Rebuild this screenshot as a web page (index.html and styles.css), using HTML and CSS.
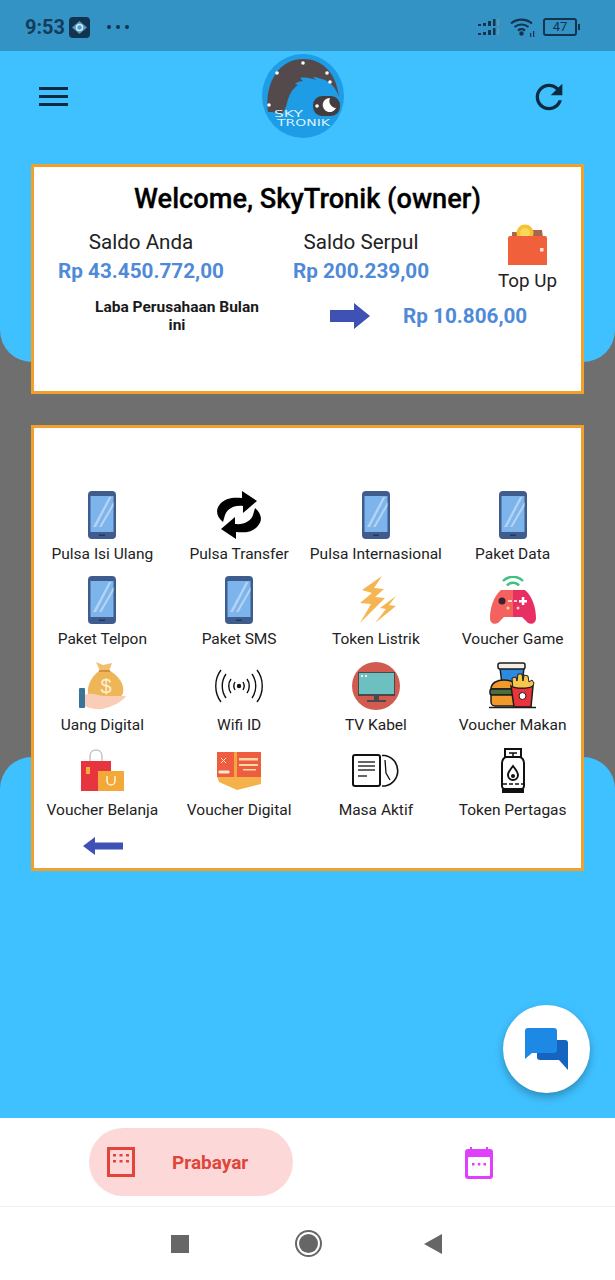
FILE: index.html
```html
<!DOCTYPE html>
<html>
  <head>
    <meta charset="utf-8" />
    <title>SkyTronik</title>
    <link rel="stylesheet" href="styles.css">
  </head>
  <body>
    <svg class="defs" width="0" height="0">
      <symbol id="phone" viewBox="0 0 28 48">
        <rect width="28" height="48" rx="4" fill="#3f5c8e"/>
        <rect x="2.500" y="5" width="23" height="36" fill="#7db4ec"/>
        <path d="M5 36 21 6h2.500L8 36zM11 36 25.500 11v4L13.500 36z" fill="#b3d3f4"/>
        <rect x="11" y="43.500" width="6" height="1.500" fill="#26395c"/>
      </symbol>
    </svg>

    <div class="status">
      <div class="status-left">
        <span class="time">9:53</span>
        <svg class="status-app" viewBox="0 0 21 21">
          <rect width="21" height="21" rx="4" fill="#12344f"/>
          <path d="M3 10.500 10.500 4 18 10.500 10.500 17z" fill="#4f9cc9"/>
          <circle cx="10.500" cy="10.500" r="3" fill="none" stroke="#d5e6ef" stroke-width="1.500"/>
        </svg>
        <span class="dots"><i></i><i></i><i></i></span>
      </div>
      <div class="status-right">
        <svg class="signal" viewBox="0 0 22 16">
          <path d="M0 5h3v2H0zM5 4h3v3H5zM10 2h3v5h-3zM15 0h2.500v7H15zM0 14h3v2H0zM5 13h3v3H5zM10 11h3v5h-3zM15 9h2.500v7H15z" fill="#12344f"/>
          <path d="M19.500 0H21v7h-1.500zM19.500 9H21v7h-1.500z" fill="#6b97ae"/>
        </svg>
        <svg class="wifi" viewBox="0 0 26 20">
          <path d="M1 6.500a16 16 0 0 1 21 0M4.500 10a11 11 0 0 1 14 0M8 13.500a6 6 0 0 1 7 0" fill="none" stroke="#12344f" stroke-width="2.200"/>
          <circle cx="11.500" cy="16.500" r="2.200" fill="#12344f"/>
          <path d="M20 16h1.200v4H20zM23 14h1.200v6H23z" fill="#12344f"/>
        </svg>
        <div class="battery"><span>47</span></div>
      </div>
    </div>

    <div class="app">
      <div class="sky-top"></div>
      <div class="sky-bottom"></div>

      <div class="content">
        <header class="topbar">
          <div class="menu"><i></i><i></i><i></i></div>
          <svg class="logo" viewBox="0 0 82 84">
            <ellipse cx="41" cy="42" rx="41" ry="42" fill="#1e9ce6"/>
            <path d="M6 58C2 28 18 5 41 5c19 0 33 13 36 38-3-9-8-14-14-17-4-1-8-3-12-3l3 3c-6-2-11-3-16-2l3 3c-3 0-6 1-8 3l3 1c-6 4-9 10-11 18-1 5-3 8-5 11-3 0-6-1-10-2z" fill="#544a4c"/>
            <rect x="51" y="42" width="27" height="20" rx="9" fill="#443d40"/>
            <path d="M68 44a7 7 0 1 0 6 10 7 7 0 0 1-6-10z" fill="#fff"/>
            <g fill="#fff">
              <circle cx="41" cy="9" r="1.800"/><circle cx="15" cy="19" r="1.800"/>
              <circle cx="65" cy="19" r="1.800"/><circle cx="68" cy="28" r="1.800"/>
              <circle cx="7" cy="51" r="1.800"/><circle cx="55" cy="52" r="1.800"/>
            </g>
            <text class="logo-text" x="12" y="63" textLength="29" lengthAdjust="spacingAndGlyphs">SKY</text>
            <text class="logo-text" x="15" y="72" textLength="53" lengthAdjust="spacingAndGlyphs">TRONIK</text>
          </svg>
          <svg class="refresh" viewBox="0 0 24 24">
            <path d="M17.650 6.350C16.200 4.900 14.210 4 12 4c-4.420 0-7.990 3.580-7.990 8s3.570 8 7.990 8c3.730 0 6.840-2.550 7.730-6h-2.080c-.82 2.330-3.040 4-5.650 4-3.310 0-6-2.690-6-6s2.690-6 6-6c1.660 0 3.140.69 4.220 1.780L13 11h7V4l-2.350 2.350z" fill="#0c2a41"/>
          </svg>
        </header>

        <section class="card card-saldo">
          <h1 class="welcome">Welcome, SkyTronik (owner)</h1>
          <div class="saldo-row">
            <div class="saldo">
              <div class="saldo-label">Saldo Anda</div>
              <div class="money">Rp 43.450.772,00</div>
            </div>
            <div class="saldo">
              <div class="saldo-label">Saldo Serpul</div>
              <div class="money">Rp 200.239,00</div>
            </div>
            <div class="topup">
              <svg class="wallet" viewBox="0 0 42 42">
                <path d="M5 8h10v6H5zM26 6h9l1 8H26z" fill="#a8654f"/>
                <circle cx="18" cy="9" r="8.500" fill="#f6c22d"/>
                <circle cx="18" cy="9" r="5" fill="#f9d65c"/>
                <path d="M3 12h35a2 2 0 0 1 2 2v27H1V14a2 2 0 0 1 2-2z" fill="#f0603a"/>
                <rect x="33" y="24" width="3.500" height="3.500" fill="#ffe3d8"/>
              </svg>
              <div class="topup-label">Top Up</div>
            </div>
          </div>
          <div class="laba-row">
            <div class="laba-label">Laba Perusahaan Bulan ini</div>
            <svg class="arrow" viewBox="0 0 40 26">
              <path d="M0 7h24V0l16 13-16 13v-7H0z" fill="#3f51b5"/>
            </svg>
            <div class="money">Rp 10.806,00</div>
          </div>
        </section>

        <section class="card card-menu">
          <div class="menu-grid">
            <div class="item">
              <svg class="ic ic-phone"><use href="#phone"/></svg>
              <span>Pulsa Isi Ulang</span>
            </div>
            <div class="item">
              <svg class="ic" viewBox="0 0 48 48">
                <path d="M27 0l15 10-14 12v-7c-9-1-16 3-18 9l-2 7C1 25 0 18 6 12c5-5 12-6 21-5z" fill="#000"/>
                <path d="M21 48 6 38l14-12v7c9 1 16-3 18-9l2-7c7 6 8 13 2 19-5 5-12 6-21 5z" fill="#000"/>
              </svg>
              <span>Pulsa Transfer</span>
            </div>
            <div class="item">
              <svg class="ic ic-phone"><use href="#phone"/></svg>
              <span>Pulsa Internasional</span>
            </div>
            <div class="item">
              <svg class="ic ic-phone"><use href="#phone"/></svg>
              <span>Paket Data</span>
            </div>

            <div class="item">
              <svg class="ic ic-phone"><use href="#phone"/></svg>
              <span>Paket Telpon</span>
            </div>
            <div class="item">
              <svg class="ic ic-phone"><use href="#phone"/></svg>
              <span>Paket SMS</span>
            </div>
            <div class="item">
              <svg class="ic" viewBox="0 0 48 48">
                <path d="M30 0 10 14l10 3L8 27l11 1L8 47l25-25-10-1 9-8-10-1z" fill="#f5b550"/>
                <path d="M44 20 28 32l6 1-11 14 21-17-7-1z" fill="#f5b550"/>
              </svg>
              <span>Token Listrik</span>
            </div>
            <div class="item">
              <svg class="ic" viewBox="0 0 48 48">
                <path d="M14 5a14 14 0 0 1 20 0M18 9.500a8 8 0 0 1 12 0" fill="none" stroke="#3fbf80" stroke-width="2.500"/>
                <path d="M12 14h12v27H15l-6 6c-4 2-8 0-8-5 0-9 3-21 11-28z" fill="#f4625f"/>
                <path d="M24 14h12c8 7 11 19 11 28 0 5-4 7-8 5l-6-6h-9z" fill="#e82f63"/>
                <circle cx="13" cy="25" r="3.500" fill="#3a2030"/>
                <path d="M30 24h8v2.500h-8zM32.800 21h2.500v8h-2.500z" fill="#fff"/>
                <path d="M19 24h4v2h-4zM25 24h3v2h-3z" fill="#ffd0c8"/>
                <circle cx="19" cy="32" r="1.500" fill="#ffd69a"/><circle cx="29" cy="32" r="1.500" fill="#ffd69a"/>
              </svg>
              <span>Voucher Game</span>
            </div>

            <div class="item">
              <svg class="ic" viewBox="0 0 48 48">
                <path d="M18 0l7 3 9-2-3 8H22z" fill="#f0c070"/>
                <path d="M22 8h9c10 6 16 15 14 23-2 6-8 8-17 8S11 38 10 31C9 23 14 14 22 8z" fill="#eeb657"/>
                <path d="M21 8h11v2H21z" fill="#d6923a"/>
                <text class="dollar" x="28" y="31">$</text>
                <path d="M6 33c8-3 13 0 20 1l22 0c-4 6-14 11-24 13-6 1-12-1-18-3z" fill="#f9cdb8"/>
                <rect x="1" y="26" width="6" height="20" rx="1" fill="#3a7298"/>
              </svg>
              <span>Uang Digital</span>
            </div>
            <div class="item">
              <svg class="ic" viewBox="0 0 48 48">
                <g fill="none" stroke="#111" stroke-width="1.400">
                  <path d="M6 8c-7 9-7 23 0 32M42 8c7 9 7 23 0 32M11 12c-5 7-5 17 0 24M37 12c5 7 5 17 0 24M16 17c-3 4-3 10 0 14M32 17c3 4 3 10 0 14M20 20c-1.500 2.500-1.500 5.500 0 8M28 20c1.500 2.500 1.500 5.500 0 8"/>
                </g>
                <circle cx="24" cy="24" r="2.200" fill="#111"/>
              </svg>
              <span>Wifi ID</span>
            </div>
            <div class="item">
              <svg class="ic" viewBox="0 0 48 48">
                <circle cx="24" cy="24" r="24" fill="#d15b4e"/>
                <rect x="6" y="10" width="37" height="24" fill="#47494d"/>
                <rect x="7" y="11" width="35" height="21" fill="#6cc0c0"/>
                <path d="M22 34h5v4h-5zM15 38h19v2H15z" fill="#47494d"/>
                <path d="M9 13h2v2H9zM13 13h2v2h-2z" fill="#e8f4f4"/>
              </svg>
              <span>TV Kabel</span>
            </div>
            <div class="item">
              <svg class="ic" viewBox="0 0 48 48">
                <path d="M11 6h24l-2 16H13z" fill="#2b8be0" stroke="#1c1c1c" stroke-width="1.500"/>
                <rect x="9" y="1" width="27" height="6" rx="2" fill="#f3efe6" stroke="#1c1c1c" stroke-width="1.500"/>
                <path d="M2 27c0-6 6-9 13-9s13 3 13 9z" fill="#f19a2c" stroke="#1c1c1c" stroke-width="1.500"/>
                <rect x="1" y="27" width="28" height="6" rx="2" fill="#4f6d3a" stroke="#1c1c1c" stroke-width="1.500"/>
                <path d="M2 33h26v7a4 4 0 0 1-4 4H6a4 4 0 0 1-4-4z" fill="#f19a2c" stroke="#1c1c1c" stroke-width="1.500"/>
                <path d="M24 28l-1-12 4-1 1 4 1-7 4 0 1 7 1-6 4 1 1 6 3-2 2 3-3 7z" fill="#f7c64c" stroke="#1c1c1c"/>
                <path d="M22 24c4 3 18 3 22 0l-2 21H25z" fill="#e8343a" stroke="#1c1c1c" stroke-width="1.500"/>
                <circle cx="33.500" cy="34" r="3.500" fill="#fff" stroke="#1c1c1c"/>
                <path d="M0 45.500h47" stroke="#1c1c1c" stroke-width="1.500"/>
              </svg>
              <span>Voucher Makan</span>
            </div>

            <div class="item">
              <svg class="ic" viewBox="0 0 48 48">
                <path d="M12 16V9c0-8 12-8 12 0v7" fill="none" stroke="#c9c3bc" stroke-width="1.500"/>
                <rect x="3" y="14" width="30" height="30" fill="#e6353f"/>
                <rect x="8" y="20" width="4" height="7" fill="#f6ad3c"/>
                <rect x="20" y="24" width="26" height="20" fill="#f3a83a"/>
                <path d="M29 29v5a4 4 0 0 0 8 0v-5" fill="none" stroke="#fff3dc" stroke-width="1.500"/>
              </svg>
              <span>Voucher Belanja</span>
            </div>
            <div class="item">
              <svg class="ic ic-wide" viewBox="0 0 48 38">
                <path d="M2 24 46 24v8L22 38 4 30z" fill="#f6b24a"/>
                <path d="M2 0h44v25H2z" fill="#ee5d3f"/>
                <path d="M19 0h3v25h-3z" fill="#f3a63e"/>
                <path d="M24 6h19v2.500H24zM24 12h19v2H24zM28 17h13v1.500H28z" fill="#fbd9a8"/>
                <path d="M4 19h10v2H4zM6 6l5 5M11 6l-5 5" stroke="#fbe9cf" fill="#fbe9cf"/>
              </svg>
              <span>Voucher Digital</span>
            </div>
            <div class="item">
              <svg class="ic" viewBox="0 0 48 48">
                <rect x="1" y="8" width="27" height="31" rx="2" fill="#fff" stroke="#111" stroke-width="2"/>
                <path d="M6 15h17M6 19h17M6 23h17M6 29h9" stroke="#333" stroke-width="1.600"/>
                <path d="M30 8.500h3a15.500 15.500 0 0 1 0 30.500h-3" fill="none" stroke="#111" stroke-width="1.600"/>
                <path d="M33 13l1 13 4 7" fill="none" stroke="#111" stroke-width="1.300"/>
              </svg>
              <span>Masa Aktif</span>
            </div>
            <div class="item">
              <svg class="ic" viewBox="0 0 48 48">
                <rect x="16" y="2" width="16" height="8" fill="#fff" stroke="#111" stroke-width="2"/>
                <path d="M20 6h8M24 6v4" stroke="#111" stroke-width="1.500"/>
                <path d="M18 10h12c3 0 5 3 5 6v23c0 3-2 3-5 3H18c-3 0-5 0-5-3V16c0-3 2-6 5-6z" fill="#fff" stroke="#111" stroke-width="2"/>
                <path d="M24 19c4 5 5 7 5 9a5 5 0 0 1-10 0c0-2 1-4 5-9z" fill="#fff" stroke="#111" stroke-width="2"/>
                <circle cx="24" cy="29" r="2" fill="#111"/>
                <path d="M14 37h20" stroke="#111" stroke-width="1.500" stroke-dasharray="4 2"/>
                <path d="M13 42h22v4H13z" fill="#111"/>
              </svg>
              <span>Token Pertagas</span>
            </div>
          </div>
          <div class="back">
            <svg class="back-arrow" viewBox="0 0 40 18">
              <path d="M40 5.500H12V0L0 9l12 9v-5.500h28z" fill="#3f51b5"/>
            </svg>
          </div>
        </section>
      </div>

      <div class="fab">
        <svg class="fab-icon" viewBox="0 0 43 42">
          <path d="M15 12h25a3 3 0 0 1 3 3v27l-9-10H15a3 3 0 0 1-3-3V15a3 3 0 0 1 3-3z" fill="#1565c0"/>
          <path d="M3 0h26a3 3 0 0 1 3 3v19a3 3 0 0 1-3 3H7l-7 6V3a3 3 0 0 1 3-3z" fill="#1e88e5"/>
        </svg>
      </div>
    </div>

    <nav class="bottomnav">
      <div class="pill">
        <svg class="pill-icon" viewBox="0 0 28 30">
          <rect x="1.500" y="1.500" width="25" height="27" fill="none" stroke="#e2443a" stroke-width="3"/>
          <path d="M6 7h3v2.500H6zM12.500 7h3v2.500h-3zM19 7h3v2.500h-3zM6 13h3v2.500H6zM12.500 13h3v2.500h-3zM19 13h3v2.500h-3z" fill="#e2443a"/>
        </svg>
        <span class="pill-text">Prabayar</span>
      </div>
      <svg class="cal" viewBox="0 0 28 32">
        <path d="M5 0h2v4H5zM21 0h2v4h-2z" fill="#e040fb"/>
        <path d="M3 2h22a3 3 0 0 1 3 3v24a3 3 0 0 1-3 3H3a3 3 0 0 1-3-3V5a3 3 0 0 1 3-3z" fill="#e040fb"/>
        <rect x="3" y="10" width="22" height="19" rx="1" fill="#fff"/>
        <path d="M7 16h2.500v2.500H7zM12.800 16h2.500v2.500h-2.500zM18.500 16H21v2.500h-2.500z" fill="#e040fb"/>
      </svg>
    </nav>

    <div class="sysnav">
      <div class="sys-square"></div>
      <div class="sys-circle"></div>
      <div class="sys-back"></div>
    </div>
  </body>
</html>
```

FILE: styles.css
```css
body {
  margin: 0;
  width: 615px;
  height: 1280px;
  overflow: hidden;
  font-family: Roboto, "Liberation Sans", sans-serif;
  background: #fff;
}
.defs {
  display: block;
  height: 0;
}
.status {
  height: 51px;
  background: #3393c4;
  display: flex;
  justify-content: space-between;
  align-items: center;
  padding: 3px 38px 0 25px;
  box-sizing: border-box;
}
.status-left,
.status-right {
  display: flex;
  align-items: center;
}
.time {
  font-size: 20px;
  font-weight: 700;
  color: #143c5a;
  width: 44px;
}
.status-app {
  width: 21px;
  height: 21px;
}
.dots {
  display: flex;
  gap: 5px;
  margin-left: 17px;
}
.dots i {
  width: 4px;
  height: 4px;
  border-radius: 50%;
  background: #12344f;
}
.signal {
  width: 22px;
  height: 16px;
}
.wifi {
  width: 26px;
  height: 20px;
  margin-left: 10px;
}
.battery {
  width: 30px;
  height: 14px;
  margin-left: 7px;
  border: 2px solid #12344f;
  border-radius: 3px;
  font-size: 13px;
  line-height: 14px;
  text-align: center;
  color: #12344f;
  position: relative;
}
.battery::after {
  content: "";
  position: absolute;
  right: -5px;
  top: 4px;
  width: 2px;
  height: 6px;
  background: #12344f;
}
.app {
  position: relative;
  height: 1067px;
  background: #6f6f6f;
}
.sky-top {
  position: absolute;
  left: 0;
  right: 0;
  top: 0;
  height: 311px;
  background: #3fc1ff;
  border-radius: 0 0 32px 32px;
}
.sky-bottom {
  position: absolute;
  left: 0;
  right: 0;
  top: 706px;
  bottom: 0;
  background: #3fc1ff;
  border-radius: 32px 32px 0 0;
}
.content {
  position: relative;
  padding: 0 31px;
}
.topbar {
  height: 113px;
  display: flex;
  align-items: flex-start;
  padding-left: 8px;
}
.menu {
  width: 29px;
  display: flex;
  flex-direction: column;
  gap: 5px;
  margin-top: 36px;
}
.menu i {
  display: block;
  height: 3px;
  background: #0c2a41;
}
.logo {
  width: 82px;
  height: 84px;
  margin-top: 3px;
  margin-left: 194px;
}
.logo-text {
  font-family: "DejaVu Sans", sans-serif;
  font-size: 9.500px;
  fill: #d9f2ff;
}
.refresh {
  width: 40px;
  height: 40px;
  margin-top: 26px;
  margin-left: 185px;
}
.card {
  width: 553px;
  box-sizing: border-box;
  background: #fff;
  border: 3px solid #f0a12c;
}
.card-saldo {
  height: 230px;
}
.welcome {
  margin: 0;
  padding-top: 14px;
  text-align: center;
  font-size: 27.200px;
  line-height: 36px;
  font-weight: 500;
  color: #000;
  -webkit-text-stroke: 0.300px #000;
}
.saldo-row {
  display: grid;
  grid-template-columns: 214px 226px 107px;
  height: 81px;
}
.saldo {
  text-align: center;
  padding-top: 12px;
}
.saldo-label {
  font-size: 20.600px;
  line-height: 27px;
  color: #222;
}
.money {
  font-size: 20.700px;
  line-height: 31px;
  font-weight: 700;
  color: #4f8ad8;
}
.topup {
  display: flex;
  flex-direction: column;
  align-items: center;
  margin-top: 7px;
}
.wallet {
  width: 42px;
  height: 42px;
}
.topup-label {
  font-size: 18.800px;
  line-height: 30px;
  color: #222;
}
.laba-row {
  display: flex;
  align-items: center;
  padding-left: 56px;
}
.laba-label {
  width: 174px;
  font-size: 15.500px;
  line-height: 18px;
  font-weight: 700;
  text-align: center;
  color: #1a1a1a;
}
.arrow {
  width: 40px;
  height: 26px;
  margin-left: 66px;
}
.laba-row .money {
  margin-left: 33px;
}
.card-menu {
  height: 446px;
  margin-top: 31px;
  padding-top: 63px;
}
.menu-grid {
  display: grid;
  grid-template-columns: repeat(4, 1fr);
  grid-auto-rows: 85.400px;
}
.item {
  display: flex;
  flex-direction: column;
  align-items: center;
  white-space: nowrap;
  font-size: 15.500px;
  line-height: 22px;
  color: #222;
}
.item span {
  margin-top: 4px;
}
.ic {
  width: 48px;
  height: 48px;
  display: block;
}
.ic-phone {
  width: 28px;
}
.ic-wide {
  width: 48px;
  height: 38px;
  margin-top: 5px;
  margin-bottom: 5px;
}
.dollar {
  font-family: "Liberation Sans", sans-serif;
  font-size: 20px;
  fill: #fdf0d4;
  text-anchor: middle;
}
.back {
  width: 25%;
  display: flex;
  justify-content: center;
  margin-top: 4px;
  padding-left: 1px;
}
.back-arrow {
  width: 40px;
  height: 18px;
}
.fab {
  position: absolute;
  left: 503px;
  top: 954px;
  width: 87px;
  height: 88px;
  border-radius: 50%;
  background: #fff;
  box-shadow: 0 4px 8px rgba(0, 0, 0, 0.28);
  display: flex;
  align-items: center;
  justify-content: center;
}
.fab-icon {
  width: 43px;
  height: 42px;
}
.bottomnav {
  height: 88px;
  box-sizing: border-box;
  padding-left: 89px;
  display: flex;
  align-items: center;
  background: #fff;
}
.pill {
  width: 204px;
  height: 68px;
  border-radius: 34px;
  background: #fcd9d8;
  display: flex;
  align-items: center;
  padding-left: 18px;
  box-sizing: border-box;
}
.pill-icon {
  width: 28px;
  height: 30px;
}
.pill-text {
  margin-left: 37px;
  font-size: 19px;
  font-weight: 700;
  color: #e0453a;
}
.cal {
  width: 28px;
  height: 32px;
  margin-left: 172px;
  margin-top: 2px;
}
.sysnav {
  height: 74px;
  border-top: 1px solid #eee;
  box-sizing: border-box;
  display: flex;
  align-items: center;
  padding-left: 171px;
}
.sys-square {
  width: 18px;
  height: 18px;
  background: #666;
}
.sys-circle {
  width: 19px;
  height: 19px;
  margin-left: 110px;
  border-radius: 50%;
  background: #666;
  box-shadow: 0 0 0 2px #fff, 0 0 0 4px #666;
}
.sys-back {
  margin-left: 106px;
  border-style: solid;
  border-width: 10px 18px 10px 0;
  border-color: transparent #666 transparent transparent;
}
```
